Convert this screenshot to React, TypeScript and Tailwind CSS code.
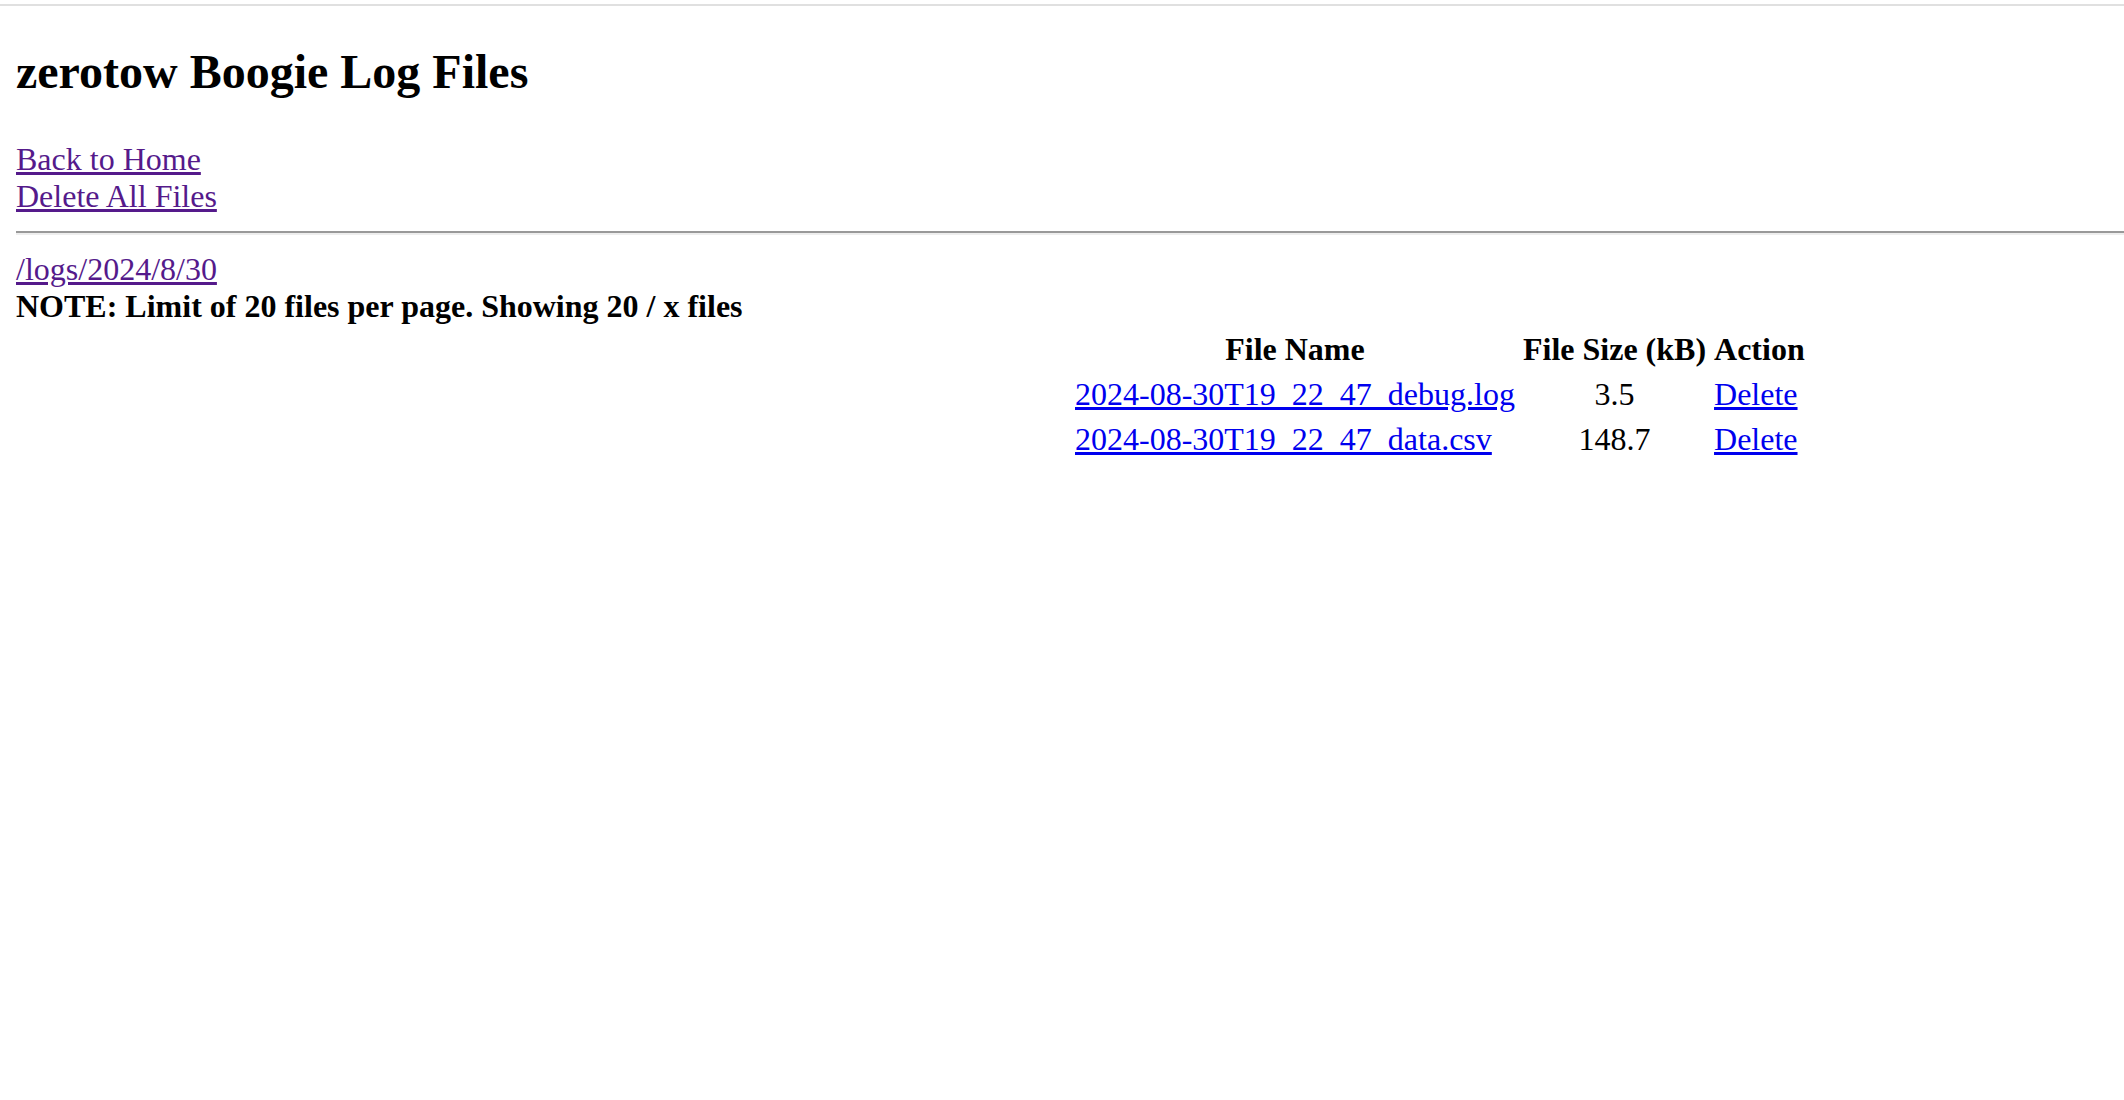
const files = [
  { name: '2024-08-30T19_22_47_debug.log', size: '3.5' },
  { name: '2024-08-30T19_22_47_data.csv', size: '148.7' },
];

export default function App() {
  return (
    <div className="min-h-[1100px] bg-white text-black" style={{ fontFamily: '"Liberation Serif", "Times New Roman", serif' }}>
      <div className="pt-[4px]">
        <div className="h-[2px] bg-[#e0e0e0]"></div>
      </div>
      <div className="pl-[16px] text-[32px] leading-[normal]">
        <h1 className="mt-[38px] mb-[42px] text-[48px] font-bold leading-[normal]">zerotow Boogie Log Files</h1>

        <div>
          <a href="#" className="block w-fit text-[#551a8b] underline decoration-[3px]">Back to Home</a>
          <a href="#" className="block w-fit text-[#551a8b] underline decoration-[3px]">Delete All Files</a>
        </div>

        <div className="mt-[16px] h-[4px] border-t-2 border-b-2 border-t-[#999999] border-b-[#eeeeee]"></div>

        <div className="mt-[16px]">
          <a href="#" className="block w-fit text-[#551a8b] underline decoration-[3px]">/logs/2024/8/30</a>
          <div className="font-bold">NOTE: Limit of 20 files per page. Showing 20 / x files</div>
        </div>

        <table className="ml-[1053px] border-separate border-spacing-[4px]">
          <thead>
            <tr>
              <th className="p-[2px] text-center font-bold">File Name</th>
              <th className="p-[2px] text-center font-bold">File Size (kB)</th>
              <th className="p-[2px] text-center font-bold">Action</th>
            </tr>
          </thead>
          <tbody>
            {files.map((f) => (
              <tr key={f.name}>
                <td className="p-[2px] text-left">
                  <a href="#" className="text-[#0000ee] underline decoration-[3px]">{f.name}</a>
                </td>
                <td className="p-[2px] text-center">{f.size}</td>
                <td className="p-[2px] text-left">
                  <a href="#" className="text-[#0000ee] underline decoration-[3px]">Delete</a>
                </td>
              </tr>
            ))}
          </tbody>
        </table>
      </div>
    </div>
  );
}
